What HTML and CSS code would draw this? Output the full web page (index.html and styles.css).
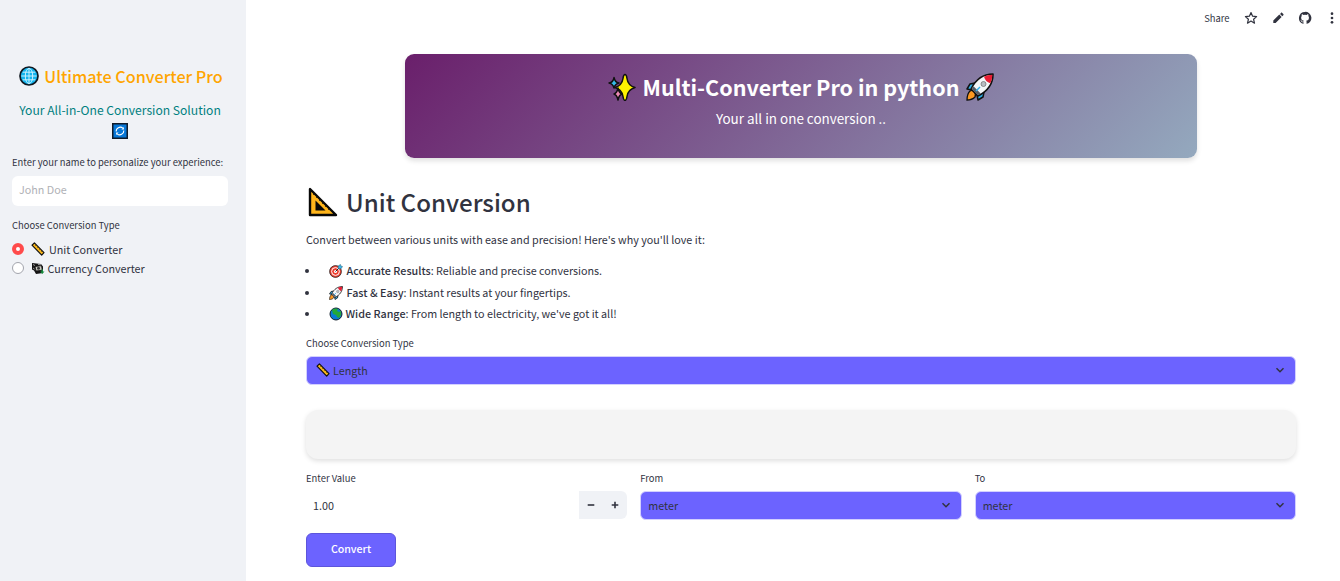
FILE: index.html
```html
<!DOCTYPE html>
<html lang="en">
<head>
<meta charset="utf-8">
<title>Multi-Converter Pro</title>
<link rel="stylesheet" href="styles.css">
</head>
<body>
<svg class="defs" width="0" height="0">
  <defs>
    <symbol id="ruler" viewBox="0 0 14 14"><path d="M1 3.2 3.4.9 13 10.7l-2.3 2.4Z" fill="#fcb81a" stroke="#111" stroke-width="1.2" stroke-linejoin="round"/><path d="M5 3l-1 1M7 5l-1 1M9 7L8 8M11 9l-1 1" stroke="#5c430a" stroke-width=".6"/></symbol>
    <symbol id="rocket" viewBox="0 0 28 28"><path d="M9 10 4 11l-3 5 5 1ZM18 19l-1 5-5 3-1-5Z" fill="#2daee8" stroke="#111" stroke-width="1.5" stroke-linejoin="round"/><path d="M4 18c3-2 7 2 5 6-2 2-5 3-8 3 0-3 1-7 3-9Z" fill="#fb9821" stroke="#111" stroke-width="1.3"/><path d="M27 1C18 1 10 6 5 16l7 7C22 18 27 10 27 1Z" fill="#f4f6f8" stroke="#111" stroke-width="1.6" stroke-linejoin="round"/><path d="M26.3 1.7c-3 0-6 .7-8.3 2 1 3.500 3 5.500 6.300 6.600 1.300-2.800 2-5.600 2-8.600Z" fill="#e81d33"/><path d="m5.800 16 1.700-2.700 7.200 7.200-2.700 1.700Z" fill="#555d66"/><circle cx="17.500" cy="11" r="2.500" fill="#b8bcc2" stroke="#777" stroke-width=".8"/><path d="m10 18 4-4" stroke="#2daee8" stroke-width="1.500"/></symbol>
    <symbol id="chevron" viewBox="0 0 10 10"><path d="m1.500 3.300 3.500 3.500 3.500-3.500" fill="none" stroke="#31333f" stroke-width="1.500"/></symbol>
  </defs>
</svg>
<div class="app">
  <aside class="sidebar">
    <h1 class="brand">
      <svg class="brand-icon" viewBox="0 0 20 20"><circle cx="10" cy="10" r="9" fill="#12b5ef" stroke="#101820" stroke-width="1.700"/><g fill="none" stroke="#d9f5ff" stroke-width=".9"><ellipse cx="10" cy="10" rx="3.700" ry="7.600"/><path d="M10 2.400v15.200M2.400 10h15.200M3.700 6.200h12.600M3.700 13.800h12.600"/></g></svg>
      <span>Ultimate Converter Pro</span>
    </h1>
    <p class="tagline">Your All-in-One Conversion Solution</p>
    <svg class="cycle" viewBox="0 0 16 16"><path d="M.75.75h14.500v14.500H.75Z" fill="#0878d8" stroke="#111c2b" stroke-width="1.500"/><path d="M4.200 8.500A4 4 0 0 1 10.800 5.200M11.800 7.500A4 4 0 0 1 5.200 10.800" fill="none" stroke="#fff" stroke-width="1.100"/><path d="M11.900 4v2.500H9.400ZM4.100 12V9.500h2.500Z" fill="#fff"/></svg>
    <label class="label name-label">Enter your name to personalize your experience:</label>
    <div class="name-input">John Doe</div>
    <div class="label type-label">Choose Conversion Type</div>
    <div class="option"><span class="radio radio-on"></span><svg class="emoji"><use href="#ruler"/></svg><span class="option-text">Unit Converter</span></div>
    <div class="option"><span class="radio"></span>
      <svg class="emoji money" viewBox="0 0 14 14"><path d="m1 2 9 1 2 2.500V12l-7 1-2-3.500-2-1Z" fill="#151515"/><path d="m4 5.500 6.500-.8.8 4.500-6.300.8Z" fill="#c9c9c0" stroke="#111" stroke-width=".8"/><circle cx="7.500" cy="7.300" r="1.500" fill="#333"/><path d="m2 3.500 2 1M7 3.500l3 .3M2 7l1.500 1" stroke="#bbb" stroke-width=".8"/><path d="M9 10.500h1.500V8.500h1.500v2h1.500L11.200 13Z" fill="#168b3d"/></svg>
      <span class="option-text">Currency Converter</span></div>
  </aside>
  <main class="main">
    <nav class="toolbar">
      <span class="share">Share</span>
      <svg class="tool" viewBox="0 0 14 14"><path d="m7 1.500 1.600 3.700 4 .4-3 2.700.9 3.900L7 10.100l-3.500 2.100.9-3.900-3-2.700 4-.4Z" fill="none" stroke="#31333f" stroke-width="1.200" stroke-linejoin="round"/></svg>
      <svg class="tool" viewBox="0 0 14 14"><path d="M2.300 12v-2.400l6-6 2.300 2.300-6 6ZM9 2.900l1-1c.4-.4.8-.4 1.200 0L12.300 3c.4.4.4.8 0 1.200l-1 1Z" fill="#31333f"/></svg>
      <svg class="tool" viewBox="0 0 16 16"><path fill="#31333f" d="M8 1a7 7 0 0 0-2.200 13.600c.4.100.5-.2.500-.4v-1.300c-2 .4-2.400-.8-2.400-.8-.3-.8-.8-1-.8-1-.6-.4.100-.4.100-.4.700 0 1.100.7 1.100.7.600 1.100 1.600.8 2 .6.100-.5.300-.8.500-.9-1.600-.2-3.200-.8-3.200-3.500 0-.8.300-1.400.7-1.900-.1-.200-.3-.9.100-1.900 0 0 .6-.2 1.900.7a6.700 6.700 0 0 1 3.500 0c1.300-.9 1.900-.7 1.900-.7.400 1 .2 1.700.1 1.900.5.500.7 1.100.7 1.900 0 2.700-1.600 3.300-3.200 3.500.3.200.5.600.5 1.300v1.900c0 .2.100.5.500.400A7 7 0 0 0 8 1Z"/></svg>
      <svg class="tool" viewBox="0 0 14 14" fill="#31333f"><circle cx="7" cy="2.700" r="1.350"/><circle cx="7" cy="7" r="1.350"/><circle cx="7" cy="11.300" r="1.350"/></svg>
    </nav>
    <header class="banner">
      <div class="banner-title">
        <svg class="banner-icon" viewBox="0 0 28 28" stroke="#111" stroke-width="1.500" stroke-linejoin="round"><path d="M17 1.500q1.500 0 2 4 .9 7 8 9-7 2-8 9-.5 4-2 4t-2-4q-1-7-8-9 7-2 8-9 .500-4 2-4Z" fill="#fff100"/><path d="M6 4.500q1 5 5 5.500-4 1-5 5-1-4-5-5 4-.500 5-5Z" fill="#35bce9"/><path d="M10 15q1 5 4 6-3 1-4 6-1-5-4-6 3-1 4-6Z" fill="#f08ab6"/></svg>
        <span>Multi-Converter Pro in python</span>
        <svg class="banner-icon"><use href="#rocket"/></svg>
      </div>
      <p class="banner-sub">Your all in one conversion ..</p>
    </header>
    <h2 class="heading">
      <svg class="heading-icon" viewBox="0 0 30 30"><path d="M2 2v26h26Z" fill="#ffb51b" stroke="#080808" stroke-width="2.400" stroke-linejoin="round"/><path d="M7.500 13.500v10h10Z" fill="#080808"/><path d="m6.500 6.500-1.200 1.200m4.200 1.800-1.200 1.200m4.200 1.800-1.200 1.200m4.200 1.800-1.200 1.200m4.200 1.800-1.200 1.200m4.200 1.800-1.200 1.200" stroke="#111"/></svg>
      <span>Unit Conversion</span>
    </h2>
    <p class="intro">Convert between various units with ease and precision! Here's why you'll love it:</p>
    <ul class="features">
      <li><svg class="emoji" viewBox="0 0 14 14"><circle cx="6.500" cy="7.500" r="5.900" fill="#ef3c2d" stroke="#262626" stroke-width=".8"/><circle cx="6.500" cy="7.500" r="3.900" fill="none" stroke="#fff"/><circle cx="6.500" cy="7.500" r="1.600" fill="#fff"/><path d="m6.500 7.500 4-4" stroke="#222"/><path d="m9 4 .4-2.300L11.500.5l.4 1.600 1.600.4-1.200 2-2.300.5Z" fill="#3ab5e8" stroke="#295f75" stroke-width=".5"/></svg><span><b>Accurate Results</b>: Reliable and precise conversions.</span></li>
      <li><svg class="emoji"><use href="#rocket"/></svg><span><b>Fast &amp; Easy</b>: Instant results at your fingertips.</span></li>
      <li><svg class="emoji earth" viewBox="0 0 14 14"><circle cx="7" cy="7" r="6" fill="#087bd4" stroke="#15202a"/><path d="M3 3Q6 .8 9 2L8 4l2 1 2-1v4l-2 3-2-1-1-2-3-1Z" fill="#23a839"/></svg><span><b>Wide Range</b>: From length to electricity, we've got it all!</span></li>
    </ul>
    <div class="label">Choose Conversion Type</div>
    <div class="select select-wide"><svg class="emoji"><use href="#ruler"/></svg><span>Length</span><svg class="chevron"><use href="#chevron"/></svg></div>
    <div class="card"></div>
    <div class="fields">
      <div><div class="label">Enter Value</div><div class="number"><span>1.00</span><div class="steps"><svg viewBox="0 0 8 8"><path d="M.7 4h6.600" stroke="#31333f" stroke-width="1.600"/></svg><svg viewBox="0 0 8 8"><path d="M.7 4h6.600M4 .7v6.600" stroke="#31333f" stroke-width="1.600"/></svg></div></div></div>
      <div><div class="label">From</div><div class="select"><span>meter</span><svg class="chevron"><use href="#chevron"/></svg></div></div>
      <div><div class="label">To</div><div class="select"><span>meter</span><svg class="chevron"><use href="#chevron"/></svg></div></div>
    </div>
    <button class="convert">Convert</button>
  </main>
</div>
</body>
</html>
```
FILE: styles.css
```css
* { box-sizing: border-box; }
body { margin: 0; background: #fff; color: #31333f; font-family: "Noto Sans CJK SC", "Noto Sans", sans-serif; font-size: 10.75px; line-height: 18px; }
h1, h2, p, ul { margin: 0; padding: 0; }
svg { display: block; flex: none; }
span { white-space: nowrap; }
.defs { position: absolute; }
.app { display: flex; height: 581px; overflow: hidden; }
.sidebar { width: 246px; flex: none; background: #f0f2f6; padding: 63px 18px 0 12px; }
.brand { display: flex; align-items: center; justify-content: center; gap: 5px; height: 26px; margin-right: -2px; color: #ffa500; font-size: 16.200px; font-weight: 500; }
.brand-icon { width: 20px; height: 20px; }
.tagline { margin-top: 10px; height: 21px; line-height: 21px; color: #008080; font-size: 12.120px; text-align: center; white-space: nowrap; }
.cycle { width: 16px; height: 16px; margin: 3px auto 0; }
.label { height: 18px; font-size: 9.420px; white-space: nowrap; display: block; }
.name-label { margin-top: 14px; }
.name-input { height: 30px; margin-top: 5px; padding: 0 7px; line-height: 27px; background: #fff; border-radius: 6px; color: #b0b1b6; }
.type-label { margin: 10px 0 5px; }
.option { display: flex; align-items: center; height: 19px; }
.option-text { padding-top: 2px; }
.radio { width: 12px; height: 12px; margin-right: 7px; border: 1px solid #a3a5ad; border-radius: 50%; background: #fff; }
.radio-on { border: 4px solid #ff4b4b; }
.emoji { width: 14px; height: 14px; margin-right: 4px; }
.money { margin-right: 2.500px; }
.main { flex: 1; padding: 0 44px 0 60px; }
.toolbar { height: 36px; display: flex; align-items: center; justify-content: flex-end; gap: 13px; margin-right: -42.5px; }
.share { font-size: 9.420px; margin-right: 1px; padding-bottom: 1px; }
.tool { width: 14px; height: 14px; }
.banner { width: 792px; height: 104px; margin: 18px auto 0; padding-top: 18px; border-radius: 9px; background: linear-gradient(135deg, #6a1f6b, #94a9be); box-shadow: 0 3px 5px rgba(0,0,0,.12); color: #fff; text-align: center; }
.banner-title { display: flex; justify-content: center; align-items: center; gap: 7px; height: 30px; font-size: 21.550px; font-weight: 700; }
.banner-icon { width: 28px; height: 28px; }
.banner-sub { margin-top: 5px; height: 22px; line-height: 22px; font-size: 13.450px; }
.heading { display: flex; align-items: center; gap: 8px; height: 36px; margin: 26px 0 11px 2px; font-size: 24.100px; font-weight: 500; }
.heading span { padding-bottom: 1px; }
.heading-icon { width: 30px; height: 30px; }
.features { list-style: none; margin: 11px 0 9px; }
.features li { display: flex; align-items: center; height: 21.500px; }
.features li::before { content: ""; width: 4px; height: 4px; margin: 0 20px 0 -1px; border-radius: 50%; background: #31333f; }
.features li:nth-child(2) { padding-top: 1px; }
.features b { font-weight: 500; }
.features .emoji { margin-right: 3.500px; }
.features .earth { margin-left: -.5px; margin-right: 3px; }
.select { display: flex; align-items: center; height: 29px; margin-top: 4px; padding: 0 10px 0 7px; border: 1px solid #d3d0ff; border-radius: 6px; background: #6c63ff; }
.select span, .number > span { padding-top: 2px; }
.select-wide { padding-left: 9px; }
.select-wide .emoji { margin-right: 3px; }
.chevron { width: 10px; height: 10px; margin-left: auto; }
.card { height: 49px; margin: 25px 0 10px; border-radius: 12px; background: #f4f4f4; box-shadow: 0 2px 5px rgba(0,0,0,.13); }
.fields { display: grid; grid-template-columns: repeat(3, 1fr); gap: 13px; }
.number { height: 29px; margin-top: 4px; display: flex; align-items: center; justify-content: space-between; padding-left: 7px; }
.steps { display: flex; align-items: center; justify-content: space-around; width: 48px; height: 28px; border-radius: 0 6px 6px 0; background: #f0f2f6; }
.steps svg { width: 8px; height: 8px; }
.convert { display: block; width: 90px; height: 34px; margin-top: 13px; padding: 0 0 2px; border: 1px solid #5d55db; border-radius: 6px; background: #6c63ff; color: #fff; font: 500 10.600px "Noto Sans CJK SC", sans-serif; }
```
